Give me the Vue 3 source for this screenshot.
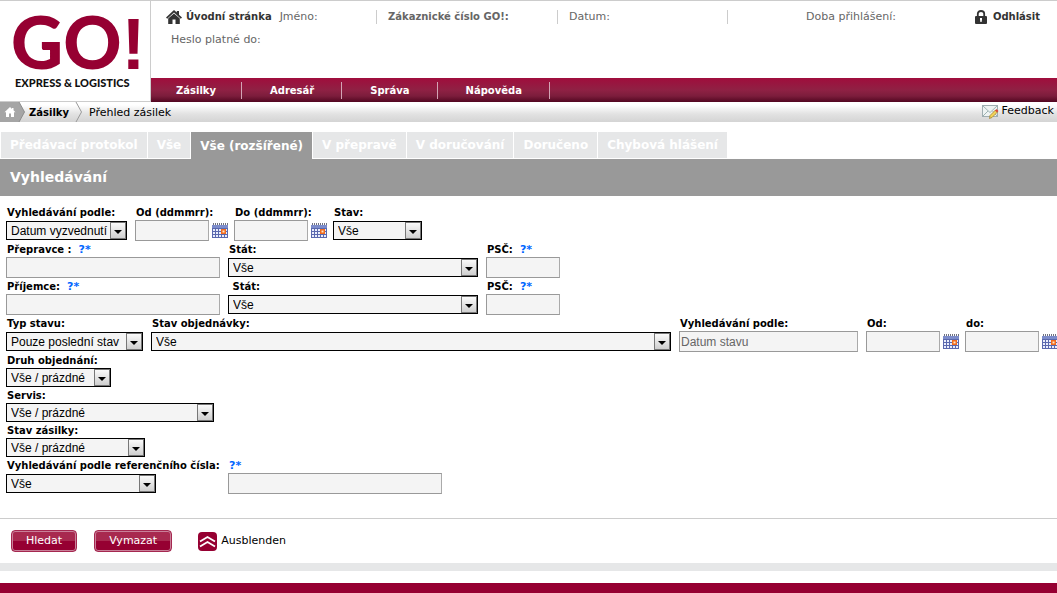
<script setup>
import { h } from 'vue'

const navItems = ['Zásilky', 'Adresář', 'Správa', 'Nápověda']
const tabs = ['Předávací protokol', 'Vše', 'Vše (rozšířené)', 'V přepravě', 'V doručování', 'Doručeno', 'Chybová hlášení']
const activeTab = 2

const rows = [
  [
    { id: 'search-by', label: 'Vyhledávání podle:', type: 'select', size: 's121', value: 'Datum vyzvednutí' },
    { id: 'date-from', label: 'Od (ddmmrr):', type: 'date', size: 's74' },
    { id: 'date-to', label: 'Do (ddmmrr):', type: 'date', size: 's74' },
    { id: 'state', label: 'Stav:', type: 'select', size: 's89', value: 'Vše' }
  ],
  [
    { id: 'sender', label: 'Přepravce :', help: true, type: 'text', size: 's214' },
    { id: 'sender-country', label: 'Stát:', type: 'select', size: 's250', value: 'Vše' },
    { id: 'sender-zip', label: 'PSČ:', help: true, type: 'text', size: 's74' }
  ],
  [
    { id: 'receiver', label: 'Příjemce:', help: true, type: 'text', size: 's214' },
    { id: 'receiver-country', label: '\u00a0Stát:', type: 'select', size: 's250', value: 'Vše' },
    { id: 'receiver-zip', label: 'PSČ:', help: true, type: 'text', size: 's74' }
  ],
  [
    { id: 'state-type', label: 'Typ stavu:', type: 'select', size: 's137', value: 'Pouze poslední stav' },
    { id: 'order-state', label: 'Stav objednávky:', type: 'select', size: 's520', value: 'Vše' },
    { id: 'state-date', label: 'Vyhledávání podle:', type: 'text', size: 's179', value: 'Datum stavu', disabled: true },
    { id: 'state-from', label: 'Od:', type: 'date', size: 's74' },
    { id: 'state-to', label: 'do:', type: 'date', size: 's74' }
  ],
  [{ id: 'order-kind', label: 'Druh objednání:', type: 'select', size: 's105', value: 'Vše / prázdné' }],
  [{ id: 'service', label: 'Servis:', type: 'select', size: 's208', value: 'Vše / prázdné' }],
  [{ id: 'shipment-state', label: 'Stav zásilky:', type: 'select', size: 's139', value: 'Vše / prázdné' }],
  [
    { id: 'reference-kind', label: 'Vyhledávání podle referenčního čísla:', type: 'select', size: 's150', column: true, value: 'Vše' },
    { id: 'reference', label: '', help: true, type: 'text', size: 's214' }
  ]
]

const CalendarIcon = () =>
  h('svg', { width: 16, height: 15, viewBox: '0 0 16 15', 'aria-hidden': 'true' }, [
    h('path', { d: 'M0 2h16v13H0z', fill: '#5a68ae' }),
    h('path', { d: 'M0 2h16v3H0z', fill: '#7c8ccb' }),
    h('path', { d: 'M1 6h2v2H1zM4 6h2v2H4zM7 6h2v2H7zM10 6h2v2h-2zM13 6h2v2h-2zM1 9h2v2H1zM4 9h2v2H4zM7 9h2v2H7zM13 9h2v2h-2zM1 12h2v2H1zM4 12h2v2H4zM7 12h2v2H7zM10 12h2v2h-2zM13 12h2v2h-2z', fill: '#e9edfb' }),
    h('path', { d: 'M1 0h1v2H1zM3 0h1v2H3zM5 0h1v2H5zM7 0h1v2H7zM9 0h1v2H9zM11 0h1v2h-1zM13 0h1v2h-1zM15 0h1v2h-1z', fill: '#6f7180' }),
    h('path', { d: 'M9 6h5v5H9z', fill: '#f26b1d' }),
    h('path', { d: 'M10.500 7.500h2v2h-2z', fill: '#ffe9c8' })
  ])
</script>

<template>
  <div class="page">
    <header class="header">
      <a class="logo" href="#" aria-label="GO! Express &amp; Logistics">
        <svg width="150" height="100" viewBox="0 0 150 100">
          <text class="logo-name" x="11" y="68">GO<tspan class="logo-mark">!</tspan></text>
          <text class="logo-tag" x="15" y="86">EXPRESS &amp; LOGISTICS</text>
        </svg>
      </a>
      <div class="header-main">
        <div class="info">
          <div class="info-cell first">
            <a class="strong-link" href="#">
              <svg width="16" height="14" viewBox="0 0 16 14" aria-hidden="true">
                <path d="M8 0 0 7.500l1.200 1.200L8 2.500l6.800 6.200L16 7.500l-3-2.800V1h-2.200v1.600z" fill="#333" />
                <path d="M2.200 8.500 8 3.400l5.800 5.100V14H9.500V9.500h-3V14H2.200z" fill="#333" />
              </svg>
              Úvodní stránka
            </a>
            <span>Jméno:</span>
          </div>
          <div class="info-cell second"><b>Zákaznické číslo GO!:</b></div>
          <div class="info-cell third">Datum:</div>
          <div class="info-cell fourth">Doba přihlášení:</div>
          <a class="strong-link logout" href="#">
            <svg width="12" height="14" viewBox="0 0 12 14" aria-hidden="true">
              <path d="M2.800 7V3.800C2.800 2 4 1 6 1s3.200 1 3.200 2.800V7" fill="none" stroke="#333" stroke-width="1.800" />
              <rect y="6" width="12" height="8" rx="1" fill="#333" />
              <path d="M5 8h2v1.500L6.600 12H5.400L5 9.500z" fill="#fff" />
            </svg>
            Odhlásit
          </a>
        </div>
        <div class="password">Heslo platné do:</div>
        <nav class="nav">
          <a v-for="item in navItems" :key="item" href="#">{{ item }}</a>
        </nav>
      </div>
    </header>

    <div class="crumbs">
      <a class="crumb-home" href="#" aria-label="Domů">
        <svg width="26" height="20" viewBox="0 0 26 20" aria-hidden="true">
          <path d="M0 0h19l5.500 10L19 20H0z" fill="#a5a5a5" />
          <path d="M19 0l5.500 10L19 20" fill="none" stroke="#8c8c8c" />
          <path d="M10 5 4.500 10.300H6V15h3v-3.500h2V15h3v-4.700h1.500L13.500 8.300V6H12v1z" fill="#fff" />
        </svg>
      </a>
      <a class="crumb strong" href="#">Zásilky</a>
      <svg width="8" height="20" viewBox="0 0 8 20" aria-hidden="true">
        <path d="M1 0l5.500 10L1 20" fill="none" stroke="#999" />
      </svg>
      <span class="crumb">Přehled zásilek</span>
      <a class="feedback" href="#">
        <svg width="17" height="15" viewBox="0 0 17 15" aria-hidden="true">
          <rect x=".5" y="1.500" width="15" height="11" fill="#eef3f2" stroke="#9fadb0" />
          <path d="M1 2l7 6.500L15 2M1 12l5-5M15 12l-4.500-5" fill="none" stroke="#9fb3b3" />
          <path d="M8 11.500 13.500 6l2 2L10 13.500l-2.500 1z" fill="#f2d257" stroke="#9a7b28" stroke-width=".7" />
          <path d="M13 6.500 14.500 5l2 2L15 8.500z" fill="#d9483b" />
        </svg>
        Feedback
      </a>
    </div>

    <div class="tabs" role="tablist">
      <button v-for="(tab, i) in tabs" :key="tab" type="button" role="tab" :aria-selected="i === activeTab" :class="{ active: i === activeTab }">{{ tab }}</button>
    </div>
    <h1 class="title">Vyhledávání</h1>

    <form @submit.prevent>
      <div class="fields">
        <div v-for="(row, r) in rows" :key="r" class="row">
          <div v-for="field in row" :key="field.id" class="field" :class="[field.type, { column: field.column }]">
            <div class="caption">
              <label v-if="field.label" :for="field.id">{{ field.label }}</label>
              <a v-if="field.help" class="help" href="#" aria-label="Nápověda">?*</a>
            </div>
            <div class="control">
              <div v-if="field.type === 'select'" class="select-box" :class="field.size">
                <select :id="field.id"><option>{{ field.value }}</option></select>
                <span class="arrow" aria-hidden="true"></span>
              </div>
              <template v-else>
                <input :id="field.id" type="text" :class="field.size" :value="field.value" :disabled="field.disabled" :aria-label="field.label ? null : 'Referenční číslo'" />
                <button v-if="field.type === 'date'" type="button" class="calendar" aria-label="Kalendář"><CalendarIcon /></button>
              </template>
            </div>
          </div>
        </div>
      </div>
      <div class="actions">
        <button class="action" type="submit">Hledat</button>
        <button class="action" type="reset">Vymazat</button>
        <a class="collapse" href="#">
          <svg width="19" height="19" viewBox="0 0 19 19" aria-hidden="true">
            <rect width="19" height="19" rx="4" fill="#960032" />
            <path d="M2 9.500 9.500 5l7.500 4.500M2 14.500 9.500 10l7.500 4.500" fill="none" stroke="#fff" stroke-width="1.800" />
          </svg>
          Ausblenden
        </a>
      </div>
    </form>
    <div class="band"></div>
    <footer class="footer"></footer>
  </div>
</template>

<style>
body {
  margin: 0;
  background: #fff;
}
</style>

<style scoped>
.page {
  overflow: hidden;
  font: 11px/14px Verdana, "DejaVu Sans", sans-serif;
  color: #000;
}
a {
  color: inherit;
  text-decoration: none;
}
svg {
  display: block;
  flex: none;
}
button {
  font: inherit;
  border: 0;
  padding: 0;
  cursor: pointer;
}

.header {
  display: flex;
  border-top: 1px solid #ccc;
}
.logo {
  flex: none;
  border-right: 1px solid #ccc;
  border-bottom: 1px solid #ccc;
}
.logo-name {
  font: 900 72px Lato, sans-serif;
  fill: #960032;
}
.logo-mark {
  font-family: "Liberation Sans", Arial, sans-serif;
}
.logo-tag {
  font: 900 11px Lato, sans-serif;
  fill: #111;
}
.header-main {
  flex: 1;
  display: flex;
  flex-direction: column;
}
.info {
  display: flex;
  align-items: center;
  padding: 9px 17px 0 15px;
  color: #666;
}
.info-cell {
  display: flex;
  align-items: center;
  gap: 8px;
  height: 14px;
  white-space: nowrap;
}
.info b {
  font-size: 10px;
}
.first {
  width: 210px;
}
.second,
.third {
  border-left: 1px solid #ccc;
  padding-left: 11px;
}
.second {
  width: 169px;
}
.third {
  width: 158px;
}
.fourth {
  border-left: 1px solid #ccc;
  padding-left: 78px;
}
.strong-link {
  display: flex;
  align-items: center;
  gap: 4px;
  color: #333;
  font-size: 10px;
  font-weight: bold;
}
.logout {
  gap: 6px;
  margin-left: auto;
}
.password {
  padding: 9px 20px;
  color: #666;
}
.nav {
  display: flex;
  align-items: center;
  height: 24px;
  margin-top: auto;
  background: linear-gradient(#a00d3c, #8f2144 50%, #7c1d3c 75%, #520721);
  font-size: 10px;
}
.nav a {
  padding: 2px 27px 1px 28px;
  border-right: 1px solid #d3a5b5;
  color: #fff;
  font-weight: bold;
}
.nav a:first-child {
  padding-left: 25px;
  padding-right: 25px;
}

.crumbs {
  display: flex;
  align-items: center;
  height: 20px;
  background: linear-gradient(#fff 15%, #e2e2e2 60%, #d4d4d4);
}
.crumb {
  padding: 1px 8px 0 6px;
}
.strong {
  padding: 1px 6px 0 3px;
  font-size: 10px;
  font-weight: bold;
}
.feedback {
  display: flex;
  align-items: center;
  gap: 3px;
  margin-left: auto;
  padding: 0 3px 2px 0;
}

.tabs {
  display: flex;
  gap: 1px;
  padding: 10px 1px 0;
}
.tabs button {
  height: 26px;
  margin-bottom: 1px;
  padding: 0 9px;
  background: #e6e7e8;
  color: #fff;
  font-size: 12px;
  font-weight: bold;
  white-space: nowrap;
}
.tabs .active {
  height: 27px;
  margin-bottom: 0;
  background: #999;
}
.title {
  margin: 0;
  padding: 0 10px;
  background: #999;
  color: #fff;
  font-size: 14px;
  line-height: 37px;
}

.fields {
  display: grid;
  gap: 2px;
  padding: 10px 6px 24px;
}
.row {
  display: flex;
}
.field {
  flex: none;
  margin-right: 8px;
}
.field.date {
  margin-right: 6px;
}
.field.column {
  width: 214px;
}
.caption {
  display: flex;
  gap: 7px;
  height: 14px;
  padding-left: 1px;
  font-size: 10px;
  font-weight: bold;
  white-space: nowrap;
}
.help {
  color: #06f;
  font-size: 11px;
}
.control {
  display: flex;
  align-items: center;
  gap: 3px;
}
.row:has(input) .control {
  height: 21px;
}
.select-box {
  position: relative;
}
select,
input {
  box-sizing: border-box;
  margin: 0;
  border-radius: 0;
  background: #f4f4f4;
  color: #000;
  font: 12px "Liberation Sans", Arial, sans-serif;
}
select {
  display: block;
  appearance: none;
  width: 100%;
  height: 19px;
  padding: 0 18px 0 4px;
  border: 1px solid #000;
}
input {
  height: 21px;
  padding: 0 1px;
  border: 1px solid #999;
  border-right-color: #aaa;
  color: #666;
}
.arrow {
  position: absolute;
  top: 1px;
  right: 1px;
  bottom: 1px;
  display: grid;
  place-items: center;
  width: 16px;
  box-sizing: border-box;
  border: 1px solid #777;
  background: linear-gradient(#fafafa, #cfcfcf);
  pointer-events: none;
}
.arrow::after {
  content: "";
  margin-top: 2px;
  border: 4px solid transparent;
  border-top-color: #000;
  border-bottom: 0;
}
.calendar {
  background: none;
}
.s74 { width: 74px; }
.s89 { width: 89px; }
.s105 { width: 105px; }
.s121 { width: 121px; }
.s137 { width: 137px; }
.s139 { width: 139px; }
.s150 { width: 150px; }
.s179 { width: 179px; }
.s208 { width: 208px; }
.s214 { width: 214px; }
.s250 { width: 250px; }
.s520 { width: 520px; }

.actions {
  display: flex;
  align-items: center;
  gap: 17px;
  height: 44px;
  padding: 0 11px;
  border-top: 1px solid #ccc;
}
.action {
  height: 22px;
  padding: 0 14px;
  border: 1px solid #a52850;
  border-radius: 4px;
  box-shadow: inset 0 0 0 1px #c98099;
  background: linear-gradient(#a8294f 50%, #960032 50%);
  color: #fff;
}
.collapse {
  display: flex;
  align-items: center;
  gap: 4px;
  margin-left: 9px;
}
.band {
  height: 8px;
  background: #e6e7e8;
}
.footer {
  height: 10px;
  margin-top: 12px;
  background: #960032;
}
</style>
